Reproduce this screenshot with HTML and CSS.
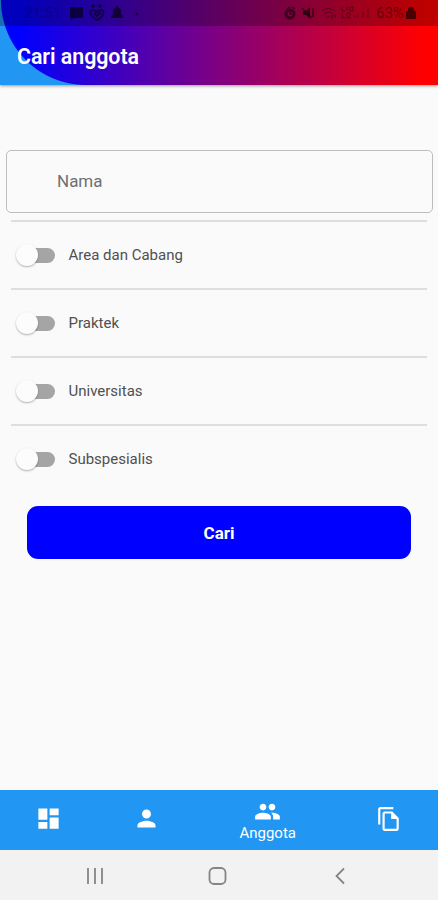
FILE: index.html
```html
<!DOCTYPE html>
<html lang="id">
<head>
<meta charset="utf-8">
<title>Cari anggota</title>
<link rel="stylesheet" href="styles.css">
</head>
<body>
<div class="app">
  <header class="appbar">
    <div class="status">
      <span class="clock">21:51</span>
      <svg class="left-icons" width="76" height="20" viewBox="0 0 76 20">
        <path d="M2 4h13v11H6l-3 2v-2H2z"/>
        <path class="line heart" d="M29 17c-8-4-8-10-4-10 2 0 4 2 4 3 0-1 2-3 4-3 4 0 4 6-4 10zM26 10l3 3 4-4"/>
        <circle cx="25" cy="3" r="1.800"/><circle cx="32" cy="3" r="1.800"/>
        <path d="M43 15v-1l2-3V8q0-3 3-3.500V3h2v1.500q3 .5 3 3.500v3l2 3v1z"/>
        <circle cx="69" cy="11" r="1.500"/>
      </svg>
      <svg class="right-icons" width="88" height="20" viewBox="0 0 88 20">
        <circle class="line thick" cx="4" cy="11" r="4"/><path class="line" d="M1 6l3-2M9 6L6 4M4 8v3h2"/>
        <path d="M17 8h3l4-4v12l-4-4h-3z"/><path class="line" d="M16 5l10 10M27 5v9"/>
        <path class="line thin" d="M36 8q6-5 13 0M38 11q5-4 9 0M41 14q2-1 3 0M46 12v4M49 11v4"/>
        <path class="line thin" d="M56 4v4h3M61 4v4M64 4h3v4h-3zM56 10v5h3M61 15v-5h3v5zM69 15v-3M72 15v-4M77 15v-6M82 15V6"/>
      </svg>
      <span class="percent">63%</span>
      <svg class="battery" width="10" height="14" viewBox="0 0 10 14"><path d="M0 5h2V3q0-2 3-2t3 2v2h2v8H0z"/></svg>
    </div>
    <h1>Cari anggota</h1>
  </header>
  <main>
    <div class="field">Nama</div>
    <div class="options">
      <div class="option"><span class="switch"></span>Area dan Cabang</div>
      <div class="option"><span class="switch"></span>Praktek</div>
      <div class="option"><span class="switch"></span>Universitas</div>
      <div class="option"><span class="switch"></span>Subspesialis</div>
    </div>
    <button class="submit">Cari</button>
  </main>
  <nav class="tabs">
    <a class="tab"><svg width="27" height="27" viewBox="0 0 24 24"><path d="M3 13h8V3H3v10zm0 8h8v-6H3v6zm10 0h8V11h-8v10zm0-18v6h8V3h-8z"/></svg></a>
    <a class="tab"><svg width="27" height="27" viewBox="0 0 24 24"><path d="M12 12c2.210 0 4-1.790 4-4s-1.790-4-4-4-4 1.790-4 4 1.790 4 4 4zm0 2c-2.670 0-8 1.340-8 4v2h16v-2c0-2.660-5.330-4-8-4z"/></svg></a>
    <a class="tab active"><svg width="27" height="27" viewBox="0 0 24 24"><path d="M16 11c1.660 0 2.990-1.340 2.990-3S17.660 5 16 5s-3 1.340-3 3 1.340 3 3 3zm-8 0c1.660 0 2.990-1.340 2.990-3S9.660 5 8 5 5 6.340 5 8s1.340 3 3 3zm0 2c-2.330 0-7 1.170-7 3.500V19h14v-2.500c0-2.330-4.670-3.500-7-3.500zm8 0c-.290 0-.620.020-.970.050 1.160.840 1.970 1.970 1.970 3.450V19h6v-2.500c0-2.330-4.670-3.500-7-3.500z"/></svg><span>Anggota</span></a>
    <a class="tab"><svg width="26" height="26" viewBox="0 0 24 24"><path d="M16 1H4c-1.100 0-2 .9-2 2v14h2V3h12V1zm-1 4H8c-1.100 0-1.990.9-1.990 2L6 21c0 1.100.890 2 1.990 2H19c1.100 0 2-.9 2-2V11l-6-6zM8 21V7h6v5h5v9H8z"/></svg></a>
  </nav>
  <div class="system">
    <svg width="20" height="20" viewBox="0 0 20 20"><path d="M3 2v16M10 2v16M17 2v16"/></svg>
    <svg width="20" height="20" viewBox="0 0 20 20"><rect x="1.500" y="2" width="16" height="16" rx="4.500"/></svg>
    <svg width="20" height="20" viewBox="0 0 20 20"><path d="M14 2.500L6.500 10l7.500 7.500"/></svg>
  </div>
</div>
</body>
</html>
```
FILE: styles.css
```css
* { box-sizing: border-box; }
body { margin: 0; font-family: Roboto, sans-serif; background: #fafafa; }
.app { width: 438px; height: 900px; display: flex; flex-direction: column; }
.appbar {
  height: 85px;
  flex: none;
  background:
    radial-gradient(circle at 86px 0, transparent 84.5px, #2196f3 85.5px) 0 0 / 86px 85px no-repeat,
    linear-gradient(90deg, #00f 4%, #800080 50%, #f00 97%);
  box-shadow: 0 1px 3px rgba(0, 0, 0, .4);
}
.status {
  height: 26px;
  padding: 0 22px 0 24px;
  display: flex;
  align-items: center;
  background: rgba(0, 0, 0, .26);
  color: rgba(0, 0, 0, .42);
  font-size: 15px;
}
.status svg { fill: rgba(0, 0, 0, .6); overflow: visible; }
.status .line { fill: none; stroke: rgba(0, 0, 0, .5); stroke-width: 1.5; }
.status .heart { stroke-width: 2; }
.status .thick { stroke-width: 3; }
.status .thin { stroke-width: 1; stroke: rgba(0, 0, 0, .38); }
.clock { width: 44px; color: rgba(0, 0, 0, .25); }
.right-icons { margin-left: auto; }
.percent { width: 30px; margin-left: 2px; }
h1 { margin: 0; padding: 0 17px; font-size: 21.4px; line-height: 61px; font-weight: 600; letter-spacing: -.05px; color: #fff; }
main { flex: 1; display: flex; flex-direction: column; padding-top: 65px; }
.field {
  height: 63px;
  margin: 0 5px 0 6px;
  padding: 0 0 2px 50px;
  border: 1.5px solid #bdbdbd;
  border-radius: 5px;
  display: flex;
  align-items: center;
  font-size: 17px;
  color: #707070;
}
.options { margin: 7px 11px 0; }
.option {
  height: 68px;
  border-top: 2px solid #dedede;
  padding-left: 5px;
  display: flex;
  align-items: center;
  gap: 13.5px;
  font-size: 15px;
  color: #505050;
}
.switch { position: relative; width: 39px; height: 22px; display: flex; align-items: center; }
.switch::before { content: ""; width: 34px; height: 15px; margin-left: 5px; border-radius: 8px; background: #a5a5a5; }
.switch::after {
  content: "";
  position: absolute;
  left: 0;
  top: 0;
  width: 22px;
  height: 22px;
  border-radius: 50%;
  background: #fcfcfc;
  box-shadow: 0 1px 2px rgba(0, 0, 0, .3);
}
.submit {
  height: 53px;
  margin: 14px 27px 0;
  border: 0;
  border-radius: 11px;
  background: #00f;
  color: #fff;
  font: 700 17px Roboto, sans-serif;
}
.tabs { height: 60px; flex: none; display: flex; background: #2196f3; }
.tab { width: 97.5px; padding-bottom: 3px; display: flex; flex-direction: column; align-items: center; justify-content: center; color: #fff; font-size: 15px; }
.tab svg { fill: #fff; }
.tab.active { width: 146px; justify-content: flex-start; padding: 8px 0 0; }
.tab.active span { line-height: 16px; }
.system { height: 50px; flex: none; padding: 1px 88px 0 85px; display: flex; justify-content: space-between; align-items: center; background: #f2f2f2; }
.system svg { fill: none; stroke: #858585; stroke-width: 1.8; }
```
